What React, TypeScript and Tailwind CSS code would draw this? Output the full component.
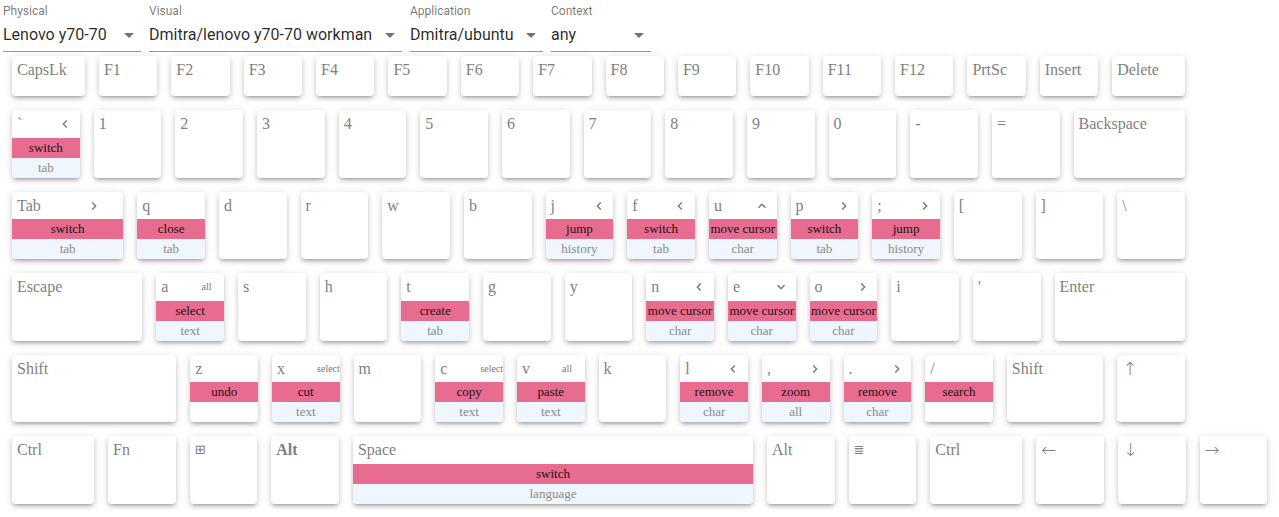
import { ReactNode } from "react";

type Mod = "left" | "right" | "up" | "down" | "all" | "selected";

interface KeyDef {
  l: string;
  w: string;
  mod?: Mod;
  act?: string;
  sub?: string;
  bold?: boolean;
  glyph?: boolean;
  arrow?: boolean;
}

const U = "w-[67.67px]";
const FK = "w-[58.38px]";

const chevrons: Record<string, string> = {
  left: "M15.41 7.41 14 6l-6 6 6 6 1.41-1.41L10.83 12z",
  right: "M10 6 8.59 7.41 13.17 12l-4.58 4.59L10 18l6-6z",
  up: "M12 8l-6 6 1.41 1.41L12 10.83l4.59 4.58L18 14z",
  down: "M16.59 8.59 12 13.17 7.41 8.59 6 10l6 6 6-6z",
};

const fnRow: KeyDef[] = [
  { l: "CapsLk", w: "w-[72.9px]" },
  ...["F1", "F2", "F3", "F4", "F5", "F6", "F7", "F8", "F9", "F10", "F11", "F12", "PrtSc", "Insert"].map(
    (l) => ({ l, w: FK })
  ),
  { l: "Delete", w: "w-[72.9px]" },
];

const rows: KeyDef[][] = [
  [
    { l: "`", w: U, mod: "left", act: "switch", sub: "tab" },
    ...["1", "2", "3", "4", "5", "6", "7", "8", "9", "0", "-", "="].map((l) => ({ l, w: U })),
    { l: "Backspace", w: "w-[111.3px]" },
  ],
  [
    { l: "Tab", w: "w-[111.3px]", mod: "right", act: "switch", sub: "tab" },
    { l: "q", w: U, act: "close", sub: "tab" },
    { l: "d", w: U },
    { l: "r", w: U },
    { l: "w", w: U },
    { l: "b", w: U },
    { l: "j", w: U, mod: "left", act: "jump", sub: "history" },
    { l: "f", w: U, mod: "left", act: "switch", sub: "tab" },
    { l: "u", w: U, mod: "up", act: "move cursor", sub: "char" },
    { l: "p", w: U, mod: "right", act: "switch", sub: "tab" },
    { l: ";", w: U, mod: "right", act: "jump", sub: "history" },
    { l: "[", w: U },
    { l: "]", w: U },
    { l: "\\", w: U },
  ],
  [
    { l: "Escape", w: "w-[130.35px]" },
    { l: "a", w: U, mod: "all", act: "select", sub: "text" },
    { l: "s", w: U },
    { l: "h", w: U },
    { l: "t", w: U, act: "create", sub: "tab" },
    { l: "g", w: U },
    { l: "y", w: U },
    { l: "n", w: U, mod: "left", act: "move cursor", sub: "char" },
    { l: "e", w: U, mod: "down", act: "move cursor", sub: "char" },
    { l: "o", w: U, mod: "right", act: "move cursor", sub: "char" },
    { l: "i", w: U },
    { l: "'", w: U },
    { l: "Enter", w: "w-[130.35px]" },
  ],
  [
    { l: "Shift", w: "w-[164.3px]" },
    { l: "z", w: U, act: "undo" },
    { l: "x", w: U, mod: "selected", act: "cut", sub: "text" },
    { l: "m", w: U },
    { l: "c", w: U, mod: "selected", act: "copy", sub: "text" },
    { l: "v", w: U, mod: "all", act: "paste", sub: "text" },
    { l: "k", w: U },
    { l: "l", w: U, mod: "left", act: "remove", sub: "char" },
    { l: ",", w: U, mod: "right", act: "zoom", sub: "all" },
    { l: ".", w: U, mod: "right", act: "remove", sub: "char" },
    { l: "/", w: U, act: "search" },
    { l: "Shift", w: "w-[96.6px]" },
    { l: "↑", w: U, arrow: true },
  ],
  [
    { l: "Ctrl", w: "w-[82px]" },
    { l: "Fn", w: U },
    { l: "⊞", w: U, glyph: true },
    { l: "Alt", w: U, bold: true },
    { l: "Space", w: "w-[400px]", act: "switch", sub: "language" },
    { l: "Alt", w: U },
    { l: "≣", w: U, glyph: true },
    { l: "Ctrl", w: "w-[92px]" },
    { l: "←", w: U, arrow: true },
    { l: "↓", w: U, arrow: true },
    { l: "→", w: U, arrow: true },
  ],
];

function ModMark({ mod }: { mod: Mod }): ReactNode {
  if (mod === "all" || mod === "selected") {
    return <span className="text-[10px] leading-[20px] text-[#777]">{mod}</span>;
  }
  return (
    <svg viewBox="0 0 24 24" className="size-4 shrink-0 fill-[#767676]">
      <path d={chevrons[mod]} />
    </svg>
  );
}

function labelFont(k: KeyDef) {
  if (k.arrow) return "font-['DejaVu_Sans',sans-serif] text-[18px] font-light";
  if (k.glyph) return "font-['DejaVu_Sans',sans-serif] text-[13px]";
  return "text-[16px]";
}

function Key({ k, tall }: { k: KeyDef; tall: boolean }) {
  return (
    <div
      className={`${k.w} ${tall ? "h-[67.5px]" : "h-[40px]"} flex shrink-0 flex-col overflow-hidden rounded bg-white shadow-[0_3px_3px_-2px_rgba(0,0,0,0.2),0_3px_4px_0_rgba(0,0,0,0.14),0_1px_8px_0_rgba(0,0,0,0.12)]`}
    >
      <div className="grid min-h-0 flex-1 grid-cols-[minmax(0,2fr)_minmax(0,1fr)] pt-[4px]">
        <span
          className={`h-[20px] whitespace-nowrap pl-[5px] leading-[20px] text-[#7f7f7f] ${labelFont(k)} ${k.bold ? "font-bold" : ""}`}
        >
          {k.l}
        </span>
        <div className="flex h-[20px] min-w-0 items-center whitespace-nowrap">
          {k.mod && <ModMark mod={k.mod} />}
        </div>
      </div>
      {k.act && (
        <>
          <div className="h-[20px] whitespace-nowrap bg-[#e76c8f] text-center text-[13px] leading-[20px] text-[#1e1114]">
            {k.act}
          </div>
          <div
            className={`h-[20px] text-center text-[13px] leading-[20px] text-[#8a8a8a] ${k.sub ? "bg-[#eff6fe]" : "bg-white"}`}
          >
            {k.sub}
          </div>
        </>
      )}
    </div>
  );
}

function Picker({ label, value, width }: { label: string; value: string; width: string }) {
  return (
    <div className={`${width} flex flex-col pt-[4px]`}>
      <span className="h-[14px] text-[12px] leading-[14px] text-black/55">{label}</span>
      <div className="relative mt-[7px] border-b border-black/40 pb-[7px]">
        <div className="whitespace-nowrap pr-6 text-[16px] leading-[19px] text-black/85">{value}</div>
        <svg viewBox="0 0 24 24" className="absolute right-0 top-[-2px] size-6 fill-black/55">
          <path d="M7 10l5 5 5-5z" />
        </svg>
      </div>
    </div>
  );
}

export default function App() {
  return (
    <div className="min-h-[517px] bg-white font-['Roboto',sans-serif]">
      <div className="flex gap-2 pl-[3px]">
        <Picker label="Physical" value="Lenovo y70-70" width="w-[138px]" />
        <Picker label="Visual" value="Dmitra/lenovo y70-70 workman" width="w-[253px]" />
        <Picker label="Application" value="Dmitra/ubuntu" width="w-[133px]" />
        <Picker label="Context" value="any" width="w-[100px]" />
      </div>

      <div className="mt-[4px] flex flex-col gap-[14px] pl-[12px] font-['Liberation_Serif','DejaVu_Serif',serif]">
        <div className="flex gap-[14px]">
          {fnRow.map((k, i) => (
            <Key key={i} k={k} tall={false} />
          ))}
        </div>
        {rows.map((row, r) => (
          <div key={r} className="flex gap-[14px]">
            {row.map((k, i) => (
              <Key key={i} k={k} tall />
            ))}
          </div>
        ))}
      </div>
    </div>
  );
}
